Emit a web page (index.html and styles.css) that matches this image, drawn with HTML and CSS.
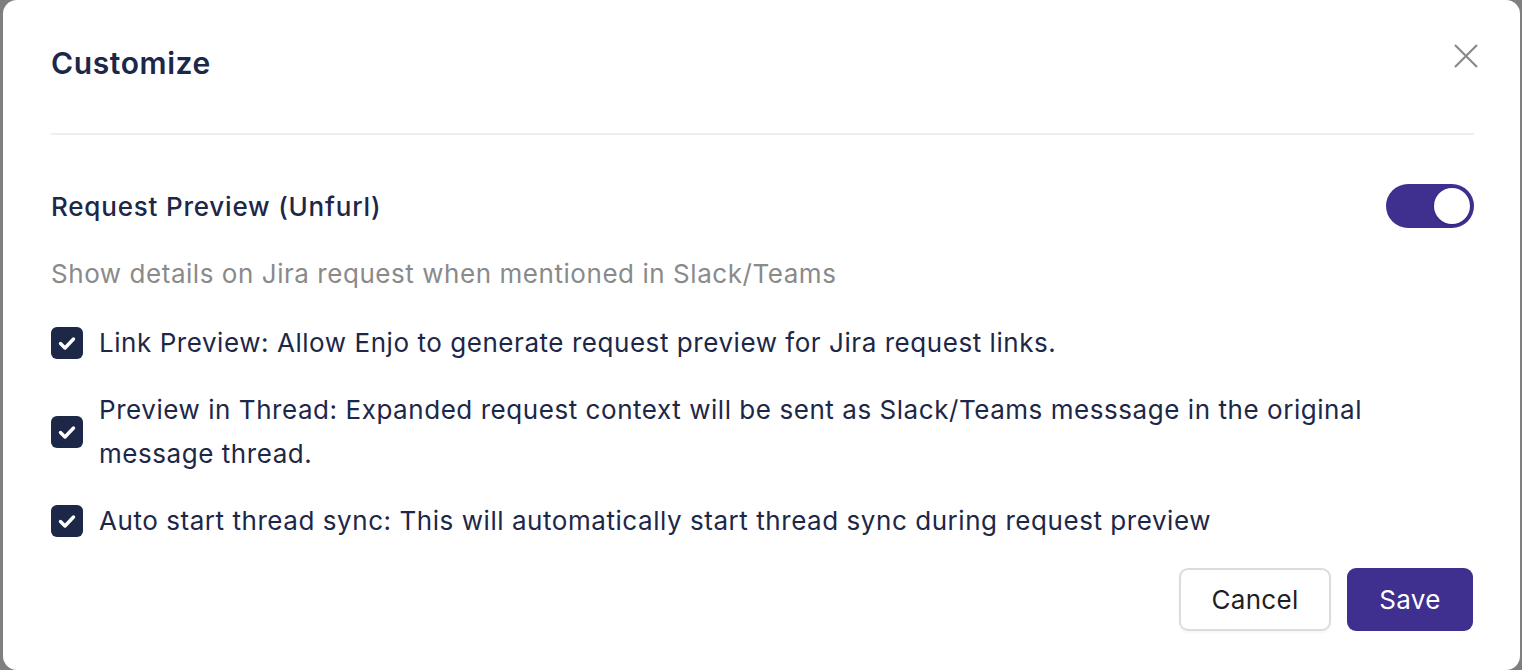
FILE: index.html
```html
<!DOCTYPE html>
<html>
<head>
    <meta charset="utf-8">
    <title>Customize</title>
    <link rel="stylesheet" href="styles.css">
</head>
<body>
<div class="modal">
    <div class="modal-header">
        <h2>Customize</h2>
        <a href="#" class="close">
            <svg width="28" height="28" viewBox="0 0 28 28"><path d="M3 3L25 25M25 3L3 25" stroke="#8a8a8a" stroke-width="2.2" fill="none"/></svg>
        </a>
    </div>
    <div class="modal-main">
        <div class="option-head">
            <p class="option-title">Request Preview (Unfurl)</p>
            <span class="switch"><span class="knob"></span></span>
        </div>
        <p class="option-desc">Show details on Jira request when mentioned in Slack/Teams</p>
        <ul class="checks">
            <li>
                <span class="box"><svg width="32" height="32" viewBox="0 0 32 32"><path d="M9.5 16.5L14 21L22.5 12" stroke="#fff" stroke-width="3.4" fill="none" stroke-linecap="round" stroke-linejoin="round"/></svg></span>
                <span class="label">Link Preview: Allow Enjo to generate request preview for Jira request links.</span>
            </li>
            <li>
                <span class="box"><svg width="32" height="32" viewBox="0 0 32 32"><path d="M9.5 16.5L14 21L22.5 12" stroke="#fff" stroke-width="3.4" fill="none" stroke-linecap="round" stroke-linejoin="round"/></svg></span>
                <span class="label">Preview in Thread: Expanded request context will be sent as Slack/Teams messsage in the original message thread.</span>
            </li>
            <li>
                <span class="box"><svg width="32" height="32" viewBox="0 0 32 32"><path d="M9.5 16.5L14 21L22.5 12" stroke="#fff" stroke-width="3.4" fill="none" stroke-linecap="round" stroke-linejoin="round"/></svg></span>
                <span class="label">Auto start thread sync: This will automatically start thread sync during request preview</span>
            </li>
        </ul>
    </div>
    <div class="modal-footer">
        <a href="#" class="btn cancel">Cancel</a>
        <a href="#" class="btn save">Save</a>
    </div>
</div>
</body>
</html>
```

FILE: styles.css
```css
html, body{
    margin: 0;
    padding: 0;
}
body{
    background: #7f7f7f;
    height: 670px;
    overflow: hidden;
    font-family: Inter, "Noto Sans", sans-serif;
    color: #1d2747;
}
p, h2, ul{
    margin: 0;
    padding: 0;
}
a{
    text-decoration: none;
}
.modal{
    margin: 0 2px 0 3px;
    height: 670px;
    box-sizing: border-box;
    background: #fff;
    border-radius: 14px;
    padding: 0 46px 0 48px;
    display: flex;
    flex-direction: column;
}
.modal-header{
    display: flex;
    justify-content: space-between;
    align-items: flex-start;
    padding-top: 43px;
    height: 90px;
    border-bottom: 2px solid #eeeeee;
}
.modal-header h2{
    font-size: 30px;
    line-height: 40px;
    font-weight: 600;
    letter-spacing: 0.6px;
    color: #1d2747;
}
.close{
    display: block;
    margin: -1px -6px 0 0;
    width: 28px;
    height: 28px;
}
.modal-main{
    padding-top: 49px;
    letter-spacing: 0.55px;
}
.option-head{
    display: flex;
    justify-content: space-between;
    align-items: center;
    height: 44px;
}
.option-title{
    font-size: 26px;
    font-weight: 500;
    letter-spacing: 0.8px;
}
.switch{
    width: 88px;
    height: 44px;
    border-radius: 22px;
    background: #3f3090;
    display: flex;
    justify-content: flex-end;
    align-items: center;
    padding: 0 4px;
    box-sizing: border-box;
}
.knob{
    width: 36px;
    height: 36px;
    border-radius: 50%;
    background: #fff;
    box-shadow: 0 1px 3px rgba(0,0,0,0.25);
}
.option-desc{
    margin-top: 28px;
    font-size: 26px;
    line-height: 36px;
    color: #8a8a8a;
}
.checks{
    list-style: none;
    margin-top: 29px;
    display: flex;
    flex-direction: column;
    gap: 23px;
}
.checks li{
    display: flex;
    align-items: center;
    gap: 16px;
    font-size: 26px;
    line-height: 44px;
}
.box{
    flex: none;
    width: 32px;
    height: 32px;
    border-radius: 6px;
    background: #1d2747;
}
.box svg{
    display: block;
}
.modal-footer{
    display: flex;
    justify-content: flex-end;
    gap: 16px;
    margin-top: 25px;
    margin-right: 1px;
}
.btn{
    display: block;
    height: 63px;
    line-height: 63px;
    box-sizing: border-box;
    border-radius: 9px;
    font-size: 26px;
    letter-spacing: 0.3px;
    text-align: center;
}
.cancel{
    width: 152px;
    border: 2px solid #dcdcdc;
    line-height: 59px;
    color: #1f1f1f;
    box-shadow: 0 2px 3px rgba(0,0,0,0.04);
}
.save{
    width: 126px;
    background: #3f3090;
    color: #fff;
}
```
